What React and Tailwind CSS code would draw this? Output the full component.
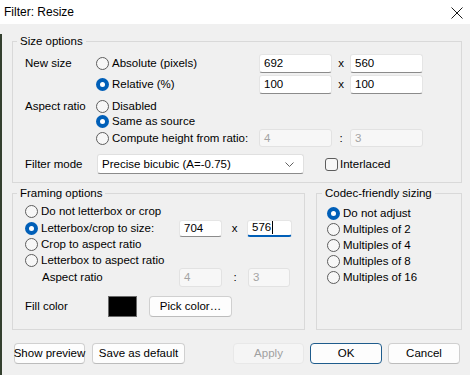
import React from "react";

function Radio({ checked }) {
  if (checked) {
    return (
      <span className="flex h-[13px] w-[13px] shrink-0 items-center justify-center rounded-full bg-[#005fb8]">
        <span className="h-[5px] w-[5px] rounded-full bg-white" />
      </span>
    );
  }
  return <span className="h-[13px] w-[13px] shrink-0 rounded-full border border-[#5d5d5d] bg-[#f7f7f7]" />;
}

function Option({ checked, label, className = "" }) {
  return (
    <div className={`flex items-center gap-[3px] ${className}`}>
      <Radio checked={checked} />
      <span className="whitespace-nowrap">{label}</span>
    </div>
  );
}

function Field({ value, disabled, focused, className = "" }) {
  let look = "bg-white border border-[#e5e5e5] border-b-[#8b8b8b]";
  if (disabled) look = "bg-[#f7f7f7] border border-[#e2e2e2] text-[#a3a3a3]";
  if (focused) look = "bg-white border border-[#e5e5e5] border-b-2 border-b-[#005fb8]";
  return (
    <div className={`flex items-center rounded-[3px] pl-[4px] ${look} ${className}`}>
      <span>{value}</span>
      {focused && <span className="ml-[1px] h-[13px] w-[1px] bg-black" />}
    </div>
  );
}

function Button({ children, primary, disabled, className = "" }) {
  let look = "bg-[#fdfdfd] border-[#d0d0d0] border-b-[#bcbcbc]";
  if (primary) look = "bg-[#fdfdfd] border-[#1f5c8c]";
  if (disabled) look = "bg-[#f5f5f5] border-[#e8e8e8] text-[#a0a0a0]";
  return (
    <button className={`flex h-[21px] items-center justify-center whitespace-nowrap rounded-[4px] border ${look} ${className}`}>
      {children}
    </button>
  );
}

function App() {
  return (
    <div className="h-[375px] w-[470px] overflow-hidden bg-[#f0f0f0] font-['Liberation_Sans',Arial,sans-serif] text-[11.5px] leading-[15px] text-black">
      <div className="flex h-[24px] items-center justify-between bg-white pl-[4px] pr-[7px]">
        <span className="text-[12px]">Filter: Resize</span>
        <svg width="12" height="12" viewBox="0 0 12 12" className="mt-[1px]">
          <path d="M0.5 0.5 L11.5 11.5 M11.5 0.5 L0.5 11.5" stroke="#1a1a1a" strokeWidth="1" fill="none" />
        </svg>
      </div>

      <div className="h-[351px] border-l-2 border-[#34402f] pl-[10px] pr-[8px]">
        <fieldset className="mt-[10px] border border-[#d9d9d9]">
          <legend className="ml-[4px] px-[3px] leading-[15px]">Size options</legend>
          <div className="flex flex-col pl-[12px] pb-[8px] pt-[4px]">
            <div className="flex h-[21px] items-center">
              <span className="w-[71px]">New size</span>
              <Option checked={false} label="Absolute (pixels)" className="w-[163px]" />
              <Field value="692" className="h-[19px] w-[73px]" />
              <span className="w-[18px] text-center">x</span>
              <Field value="560" className="h-[19px] w-[73px]" />
            </div>
            <div className="flex h-[21px] items-center">
              <span className="w-[71px]" />
              <Option checked label="Relative (%)" className="w-[163px]" />
              <Field value="100" className="h-[19px] w-[73px]" />
              <span className="w-[18px] text-center">x</span>
              <Field value="100" className="h-[19px] w-[73px]" />
            </div>
            <div className="mt-[3px] flex h-[16px] items-center">
              <span className="w-[71px]">Aspect ratio</span>
              <Option checked={false} label="Disabled" />
            </div>
            <div className="flex h-[15px] items-center">
              <span className="w-[71px]" />
              <Option checked label="Same as source" />
            </div>
            <div className="flex h-[18px] items-center">
              <span className="w-[71px]" />
              <Option checked={false} label="Compute height from ratio:" className="w-[163px]" />
              <Field value="4" disabled className="h-[18px] w-[73px]" />
              <span className="w-[18px] text-center">:</span>
              <Field value="3" disabled className="h-[18px] w-[73px]" />
            </div>
            <div className="mt-[7px] flex h-[20px] items-center">
              <span className="w-[72px]">Filter mode</span>
              <div className="flex h-[20px] w-[207px] items-center justify-between rounded-[3px] border border-[#e0e0e0] border-b-[#8b8b8b] bg-white pl-[4px] pr-[9px]">
                <span>Precise bicubic (A=-0.75)</span>
                <svg width="9" height="5" viewBox="0 0 9 5">
                  <path d="M0.5 0.5 L4.5 4.5 L8.5 0.5" stroke="#606060" strokeWidth="1" fill="none" />
                </svg>
              </div>
              <span className="ml-[21px] h-[13px] w-[13px] rounded-[3px] border border-[#5d5d5d] bg-[#f7f7f7]" />
              <span className="ml-[2px]">Interlaced</span>
            </div>
          </div>
        </fieldset>

        <div className="mt-[3px] flex gap-[11px]">
          <fieldset className="w-[293px] border border-[#d9d9d9]">
            <legend className="ml-[4px] px-[3px] leading-[15px]">Framing options</legend>
            <div className="flex flex-col pl-[12px] pb-[12px] pt-[2px]">
              <Option checked={false} label="Do not letterbox or crop" className="h-[16px]" />
              <div className="flex h-[18px] items-center">
                <Option checked label="Letterbox/crop to size:" className="w-[154px]" />
                <Field value="704" className="h-[17px] w-[43px]" />
                <span className="w-[25px] text-center">x</span>
                <Field value="576" focused className="h-[17px] w-[45px]" />
              </div>
              <Option checked={false} label="Crop to aspect ratio" className="h-[15px]" />
              <Option checked={false} label="Letterbox to aspect ratio" className="h-[16px]" />
              <div className="flex h-[19px] items-center">
                <span className="w-[154px] pl-[17px]">Aspect ratio</span>
                <Field value="4" disabled className="h-[19px] w-[43px]" />
                <span className="w-[26px] text-center">:</span>
                <Field value="3" disabled className="h-[19px] w-[42px]" />
              </div>
              <div className="mt-[9px] flex h-[21px] items-center">
                <span className="w-[83px]">Fill color</span>
                <span className="h-[21px] w-[29px] border border-[#6a6a6a] bg-black" />
                <Button className="ml-[12px] w-[83px]">Pick color…</Button>
              </div>
            </div>
          </fieldset>

          <fieldset className="flex-1 border border-[#d9d9d9]">
            <legend className="ml-[5px] px-[3px] leading-[15px]">Codec-friendly sizing</legend>
            <div className="flex flex-col pl-[10px] pt-[4px]">
              <Option checked label="Do not adjust" className="h-[16px]" />
              <Option checked={false} label="Multiples of 2" className="h-[16px]" />
              <Option checked={false} label="Multiples of 4" className="h-[16px]" />
              <Option checked={false} label="Multiples of 8" className="h-[16px]" />
              <Option checked={false} label="Multiples of 16" className="h-[16px]" />
            </div>
          </fieldset>
        </div>

        <div className="mt-[13px] flex justify-between px-[2px]">
          <div className="flex gap-[7px]">
            <Button className="w-[71px]">Show preview</Button>
            <Button className="w-[93px]">Save as default</Button>
          </div>
          <div className="flex gap-[6px]">
            <Button disabled className="w-[71px]">Apply</Button>
            <Button primary className="w-[72px]">OK</Button>
            <Button className="w-[72px]">Cancel</Button>
          </div>
        </div>
      </div>
    </div>
  );
}

export default App;
